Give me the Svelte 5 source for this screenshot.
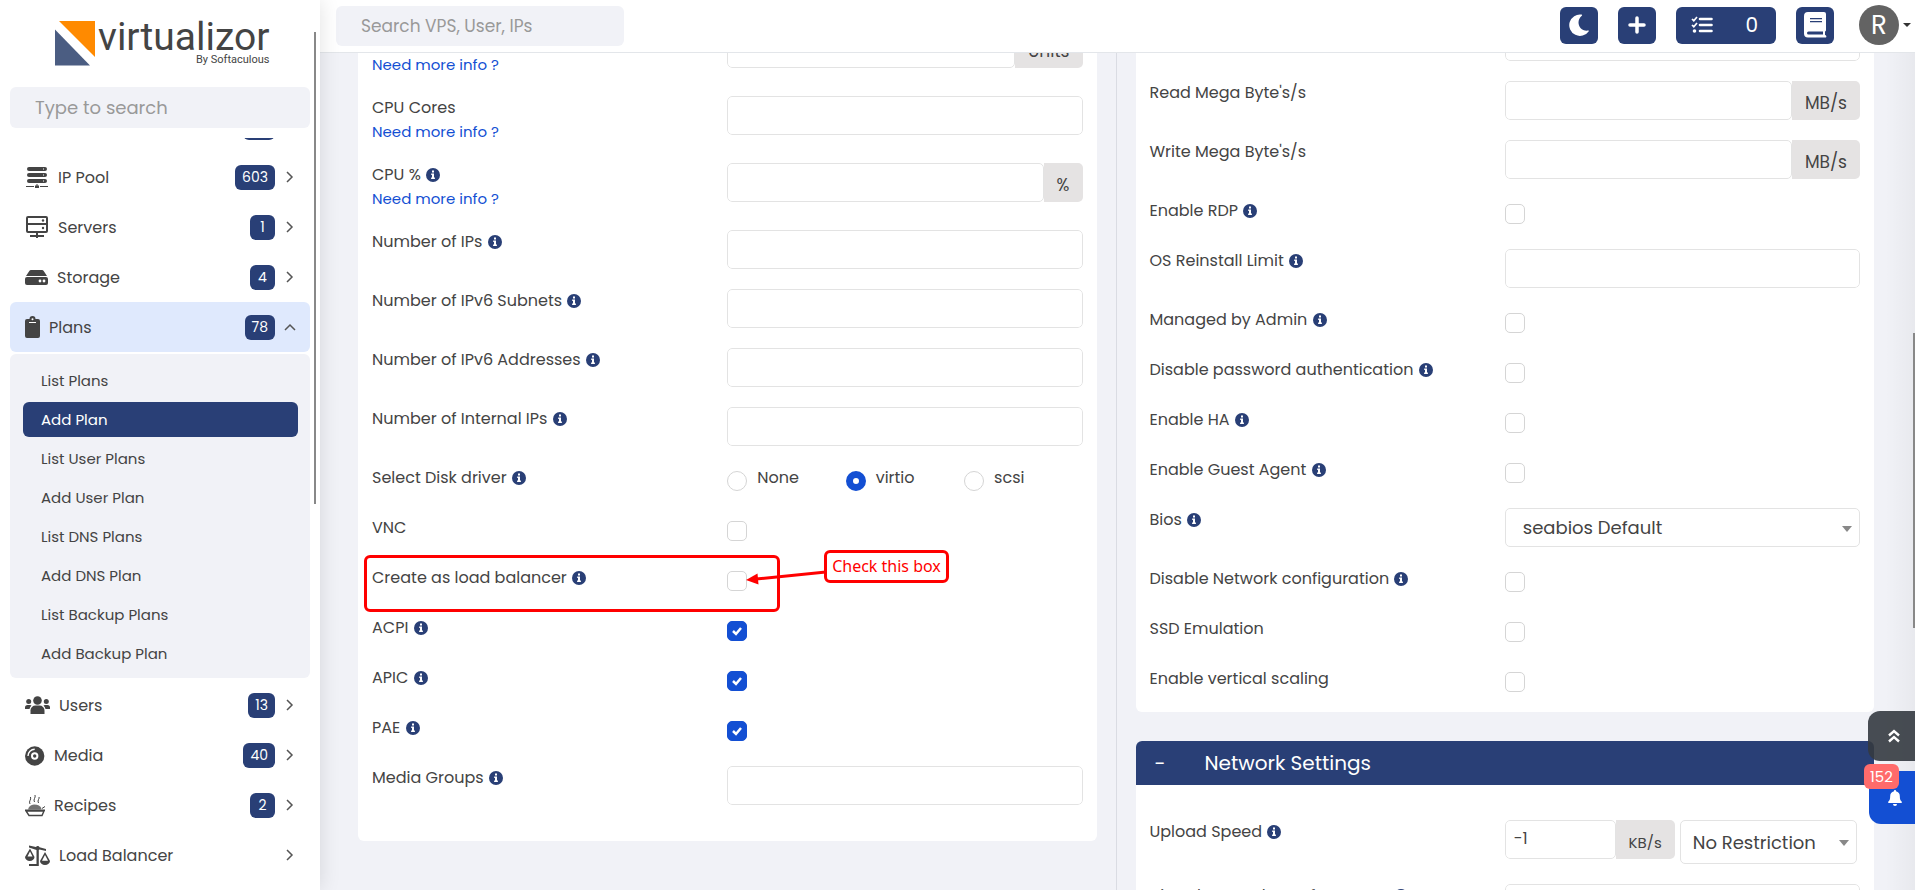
<script lang="ts">
  import { onMount } from 'svelte';

  interface Field {
    id: string;
    label: string;
    kind: 'text' | 'check' | 'radio' | 'select';
    info?: boolean;
    more?: boolean;
    unit?: string;
    value?: string;
    checked?: boolean;
    marked?: boolean;
    options?: string[];
  }

  // sidebar entries, w is the icon width
  const topMenu = [
    { name: 'Virtual Servers', icon: 'servers', w: 24, count: '45', open: false },
    { name: 'IP Pool', icon: 'ippool', w: 24, count: '603', open: false },
    { name: 'Servers', icon: 'servers', w: 24, count: '1', open: false },
    { name: 'Storage', icon: 'storage', w: 23, count: '4', open: false },
    { name: 'Plans', icon: 'plans', w: 15, count: '78', open: true }
  ];
  const bottomMenu = [
    { name: 'Users', icon: 'users', w: 25, count: '13', open: false },
    { name: 'Media', icon: 'media', w: 20, count: '40', open: false },
    { name: 'Recipes', icon: 'recipes', w: 20, count: '2', open: false },
    { name: 'Load Balancer', icon: 'balance', w: 25, count: '', open: false }
  ];
  const planLinks = [
    'List Plans',
    'Add Plan',
    'List User Plans',
    'Add User Plan',
    'List DNS Plans',
    'Add DNS Plan',
    'List Backup Plans',
    'Add Backup Plan'
  ];
  const activeLink = 'Add Plan';

  const leftFields: Field[] = [
    { id: 'cpu', label: 'CPU Units', kind: 'text', info: true, more: true, unit: 'Units' },
    { id: 'cores', label: 'CPU Cores', kind: 'text', more: true },
    { id: 'cpu_percent', label: 'CPU %', kind: 'text', info: true, more: true, unit: '%' },
    { id: 'ips', label: 'Number of IPs', kind: 'text', info: true },
    { id: 'ips6_subnet', label: 'Number of IPv6 Subnets', kind: 'text', info: true },
    { id: 'ips6', label: 'Number of IPv6 Addresses', kind: 'text', info: true },
    { id: 'ips_int', label: 'Number of Internal IPs', kind: 'text', info: true },
    { id: 'disk_driver', label: 'Select Disk driver', kind: 'radio', info: true, options: ['None', 'virtio', 'scsi'] },
    { id: 'vnc', label: 'VNC', kind: 'check' },
    { id: 'load_balancer', label: 'Create as load balancer', kind: 'check', info: true, marked: true },
    { id: 'acpi', label: 'ACPI', kind: 'check', info: true, checked: true },
    { id: 'apic', label: 'APIC', kind: 'check', info: true, checked: true },
    { id: 'pae', label: 'PAE', kind: 'check', info: true, checked: true },
    { id: 'mgs', label: 'Media Groups', kind: 'text', info: true }
  ];

  const rightFields: Field[] = [
    { id: 'total_iops', label: 'Total I/O per sec', kind: 'text' },
    { id: 'read_mb', label: "Read Mega Byte's/s", kind: 'text', unit: 'MB/s' },
    { id: 'write_mb', label: "Write Mega Byte's/s", kind: 'text', unit: 'MB/s' },
    { id: 'rdp', label: 'Enable RDP', kind: 'check', info: true },
    { id: 'os_limit', label: 'OS Reinstall Limit', kind: 'text', info: true },
    { id: 'admin_managed', label: 'Managed by Admin', kind: 'check', info: true },
    { id: 'disable_pw', label: 'Disable password authentication', kind: 'check', info: true },
    { id: 'ha', label: 'Enable HA', kind: 'check', info: true },
    { id: 'guest_agent', label: 'Enable Guest Agent', kind: 'check', info: true },
    { id: 'bios', label: 'Bios', kind: 'select', info: true, options: ['seabios Default', 'ovmf'] },
    { id: 'disable_nw', label: 'Disable Network configuration', kind: 'check', info: true },
    { id: 'ssd', label: 'SSD Emulation', kind: 'check' },
    { id: 'vertical', label: 'Enable vertical scaling', kind: 'check' }
  ];

  let driver = $state('virtio');
  let menuEl: HTMLElement;

  onMount(() => {
    menuEl.scrollTop = 36;
  });
</script>

{#snippet infoIcon()}
  <svg class="info" viewBox="0 0 14 14" aria-hidden="true">
    <circle cx="7" cy="7" r="7" fill="#293f76" />
    <path d="M6 2.6h2v1.9H6zM5.2 5.6H8v4h.9v1.3H5.1V9.6H6V6.9h-.8z" fill="#fff" />
  </svg>
{/snippet}

{#snippet menuIcon(name: string, w: number)}
  <svg width={w} height="24" viewBox="0 0 {w} 24" fill="#444" aria-hidden="true">
    {#if name === 'ippool'}
      <rect x="2" y="2" width="20" height="4" rx="2" />
      <rect x="2" y="8" width="20" height="4" rx="2" />
      <rect x="2" y="14" width="20" height="4" rx="2" />
      <path d="M18 3.5h1v1h-1zM18 9.5h1v1h-1zM18 15.5h1v1h-1z" fill="#fff" />
      <path d="M1 21h8v1H1zM15 21h8v1h-8zM11.5 19h1v1.5H14v2.500h-4v-2.500h1.500z" />
    {:else if name === 'servers'}
      <path d="M3 1h18a2 2 0 0 1 2 2v13a2 2 0 0 1-2 2h-8v2h6v2h-6v1h-2v-1H5v-2h6v-2H3a2 2 0 0 1-2-2V3a2 2 0 0 1 2-2zm0 2v5h18V3zm0 7v6h18v-6z" fill-rule="evenodd" />
      <circle cx="18" cy="5.5" r="1.2" />
      <circle cx="18" cy="13" r="1.2" />
    {:else if name === 'storage'}
      <path d="M6 5h11a2 2 0 0 1 1.700.9L22 11H1l3.300-5.100A2 2 0 0 1 6 5z" />
      <path d="M2 12h19a2 2 0 0 1 2 2v4a2 2 0 0 1-2 2H2a2 2 0 0 1-2-2v-4a2 2 0 0 1 2-2z" />
      <circle cx="15" cy="16" r="1.4" fill="#fff" />
      <circle cx="19" cy="16" r="1.4" fill="#fff" />
    {:else if name === 'plans'}
      <path d="M2 4h2.500a3 3 0 0 1 6 0H13a2 2 0 0 1 2 2v15a2 2 0 0 1-2 2H2a2 2 0 0 1-2-2V6a2 2 0 0 1 2-2z" />
      <circle cx="7.5" cy="4.3" r="1" fill="#fff" />
      <path d="M4 7h7v1H4z" fill="#fff" />
    {:else if name === 'users'}
      <circle cx="12.5" cy="7.5" r="4.3" />
      <path d="M5.500 21v-3.500a5 5 0 0 1 5-5h4a5 5 0 0 1 5 5V21z" />
      <circle cx="3.7" cy="8.5" r="2.5" />
      <circle cx="21.3" cy="8.5" r="2.5" />
      <path d="M0 16v-1.500A2.500 2.500 0 0 1 2.500 12H5q1 0 1.500.5Q4.800 14 4.500 16zM25 16v-1.500a2.500 2.500 0 0 0-2.500-2.500H20q-1 0-1.500.5 1.700 1.500 2 3.500z" />
    {:else if name === 'media'}
      <circle cx="9.7" cy="13" r="9.7" />
      <circle cx="9.7" cy="13" r="2.7" fill="none" stroke="#fff" stroke-width="2" />
      <path d="M3 13a6.700 6.700 0 0 1 6.700-6.700" fill="none" stroke="#fff" stroke-width="1.4" />
    {:else if name === 'recipes'}
      <g fill="none" stroke="#444" stroke-width="1">
        <path d="M1 18h18l-2 4.500H4z" stroke-width="1.4" />
        <path d="M17 15.500l3-2M5 11q-1-2 0-3.500T5.500 4M9.500 9q-1-2 0-3.500T10 2M13.500 10q-1-2 0-3.500T14 4" />
      </g>
      <path d="M3 16.500Q4 12 9 11.500q6 0 7.500 4l-1 1z" opacity=".75" />
      <path d="M0 16.500h20v1.500H0z" />
    {:else if name === 'balance'}
      <path d="M4 2.500l7 1.500a2 2 0 0 1 3.500.3L21 6v2l-6.500-1.500-.7.500v16H4V21h7.500V7L4 4.500z" />
      <path d="M5 5.500L9.500 14a4.700 4 0 0 1-9.500 0zM5 8.500L2.500 13.500h5zM20 9l5 9a5 4 0 0 1-10 0zM20 12l-3 5.700h6z" fill-rule="evenodd" />
    {/if}
  </svg>
{/snippet}

{#snippet menuRow(item: { name: string; icon: string; w: number; count: string; open: boolean })}
  <a class={`menu-row ${item.open ? 'open' : ''}`} href="#menu">
    {@render menuIcon(item.icon, item.w)}
    <span class="menu-name">{item.name}</span>
    {#if item.count}
      <span class="badge">{item.count}</span>
    {/if}
    <svg class="chevron" width="12" height="12" viewBox="0 0 12 12" fill="none" stroke="#555" stroke-width="1.5" aria-hidden="true">
      <path d={item.open ? 'M1 9l5-5 5 5' : 'M3 1l5 5-5 5'} />
    </svg>
  </a>
{/snippet}

{#snippet fieldRow(f: Field)}
  <div class="row">
    <div class="row-label">
      {#if f.kind === 'radio'}
        <span>{f.label}</span>
      {:else}
        <label for={f.id}>{f.label}</label>
      {/if}
      {#if f.info}{@render infoIcon()}{/if}
      {#if f.more}<a class="more" href="#more">Need more info ?</a>{/if}
    </div>

    {#if f.kind === 'text'}
      <div class="group">
        <input class="text" id={f.id} type="text" />
        {#if f.unit}<span class="unit">{f.unit}</span>{/if}
      </div>
    {:else if f.kind === 'check'}
      <div class="toggle"><input id={f.id} type="checkbox" checked={f.checked} /></div>
    {:else if f.kind === 'radio'}
      <div class="toggle radios">
        {#each f.options ?? [] as opt}
          <label class="radio"><input type="radio" name={f.id} value={opt} bind:group={driver} /><span>{opt}</span></label>
        {/each}
      </div>
    {:else}
      <div class="select">
        <select id={f.id}>
          {#each f.options ?? [] as opt}<option>{opt}</option>{/each}
        </select>
      </div>
    {/if}

    {#if f.marked}
      <!-- hint drawn over the row -->
      <div class="mark-box"></div>
      <svg class="mark-arrow" width="80" height="20" viewBox="0 0 80 20" aria-hidden="true">
        <path d="M80 6L10 13" stroke="#f00" stroke-width="3" />
        <path d="M0 14l11.500-6.500 1 11z" fill="#f00" />
      </svg>
      <div class="mark-text">Check this box</div>
    {/if}
  </div>
{/snippet}

<div class="layout">
  <aside>
    <a class="logo" href="#home">
      <svg width="40" height="46" viewBox="0 0 40 46" aria-hidden="true">
        <path d="M4 1h36v36z" fill="#ff8a00" />
        <path d="M0 9.500v36h35z" fill="#4b5d82" />
      </svg>
      <span class="brand">
        <span class="brand-name">virtualizor</span>
        <span class="brand-by">By Softaculous</span>
      </span>
    </a>

    <input class="side-search" type="text" placeholder="Type to search" aria-label="Type to search" />

    <nav bind:this={menuEl}>
      {#each topMenu as item}{@render menuRow(item)}{/each}
      <div class="submenu">
        {#each planLinks as link}
          <a class={link === activeLink ? 'active' : ''} href="#plans">{link}</a>
        {/each}
      </div>
      {#each bottomMenu as item}{@render menuRow(item)}{/each}
    </nav>
    <div class="side-thumb"></div>
  </aside>

  <div class="page">
    <header>
      <input class="top-search" type="text" placeholder="Search VPS, User, IPs" aria-label="Search VPS, User, IPs" />
      <div class="tools">
        <button class="tool" aria-label="Dark mode">
          <svg width="22" height="22" viewBox="0 0 22 22" fill="#fff"><path d="M13.500 .6A10.700 10.700 0 1 0 20.800 17.200 .5.500 0 0 0 20.300 16.500C11.500 18 7 7.500 13.800 1.700 14.400 1.200 14.200.7 13.500.6z" /></svg>
        </button>
        <button class="tool" aria-label="Add">
          <svg width="18" height="18" viewBox="0 0 18 18" stroke="#fff" stroke-width="3.5" stroke-linecap="round"><path d="M9 2v14M2 9h14" /></svg>
        </button>
        <button class="tool tasks" aria-label="Tasks">
          <svg width="22" height="18" viewBox="0 0 22 18" fill="none" stroke="#fff">
            <path d="M9 3h11.500M9 9h11.500M9 15h11.500" stroke-width="2.6" stroke-linecap="round" />
            <path d="M1 3l1.800 1.700L6 1M1 9l1.800 1.700L6 7" stroke-width="1.7" />
            <circle cx="3.5" cy="15" r="1.8" fill="#fff" stroke="none" />
          </svg>
          <span>0</span>
        </button>
        <button class="tool" aria-label="Documentation">
          <svg width="24" height="26" viewBox="0 0 24 26" fill="#fff">
            <path d="M5 0h16a2 2 0 0 1 2 2v16a1.500 1.500 0 0 1-1 1.500v3.500a1.500 1.500 0 0 1 1 2.500H5a4 4 0 0 1-4-4V4a4 4 0 0 1 4-4z" />
            <path d="M7 6h12v1.300H7zM7 9h12v1.300H7zM5.500 19.500H20v3H5.500a1.500 1.500 0 0 1 0-3z" fill="#293f76" />
          </svg>
        </button>
        <button class="account" aria-label="Account"><span class="avatar">R</span><span class="caret"></span></button>
      </div>
    </header>

    <main>
      <div class="columns">
        <section class="card tall">
          {#each leftFields as f}{@render fieldRow(f)}{/each}
        </section>

        <div class="divider"></div>

        <div class="stack">
          <section class="card">
            {#each rightFields as f}{@render fieldRow(f)}{/each}
          </section>

          <section class="panel">
            <h2><span class="minus">-</span>Network Settings</h2>
            <div class="panel-body">
              <div class="row">
                <div class="row-label">
                  <label for="upload">Upload Speed</label>
                  {@render infoIcon()}
                </div>
                <div class="speed">
                  <div class="group">
                    <input class="text" id="upload" type="text" value="-1" />
                    <span class="unit small">KB/s</span>
                  </div>
                  <div class="select high">
                    <select aria-label="Upload Speed preset"><option>No Restriction</option></select>
                  </div>
                </div>
              </div>
              {@render fieldRow({ id: 'nic', label: 'Virtual Network Interface Type', kind: 'text', info: true })}
            </div>
          </section>
        </div>
      </div>
    </main>
  </div>

  <button class="to-top" aria-label="Back to top">
    <svg width="12" height="14" viewBox="0 0 12 14" fill="none" stroke="#fff" stroke-width="2.4"><path d="M1 6.500l5-4.500 5 4.500M1 12.500L6 8l5 4.500" /></svg>
  </button>
  <button class="alerts" aria-label="Notifications">
    <svg width="14" height="16" viewBox="0 0 14 16" fill="#fff"><path d="M7 0a1 1 0 0 1 1 1.200A5 5 0 0 1 11.800 6c0 3.500.7 4.500 1.800 5.500.8.800.3 1.500-.6 1.500H1c-.9 0-1.400-.7-.6-1.500C1.500 10.500 2.200 9.500 2.200 6A5 5 0 0 1 6 1.200 1 1 0 0 1 7 0zM5 14h4a2 2 0 0 1-4 0z" /></svg>
    <span class="alert-count">152</span>
  </button>
  <div class="page-thumb"></div>
</div>

<style>
  :global(body) {
    overflow: hidden;
  }

  .layout {
    display: flex;
    height: 100vh;
    font-family: Poppins, Inter, sans-serif;
    font-size: 16px;
    color: #444;
    background: #f1f2f7;
  }
  .layout * {
    box-sizing: border-box;
  }
  a {
    color: inherit;
    text-decoration: none;
  }
  input,
  select,
  button {
    font: inherit;
    color: inherit;
  }
  button {
    border: 0;
    padding: 0;
    cursor: pointer;
  }

  /* sidebar */
  aside {
    position: relative;
    z-index: 3;
    display: flex;
    flex-direction: column;
    flex: none;
    width: 320px;
    padding: 20px 10px 0;
    background: #fff;
    box-shadow: 0 0 20px rgba(0, 0, 0, 0.12);
  }
  .logo {
    display: flex;
    gap: 3px;
    height: 46px;
    padding-left: 45px;
  }
  .brand {
    display: flex;
    flex-direction: column;
    align-items: flex-end;
    font-family: Roboto, sans-serif;
  }
  .brand-name {
    font-size: 39px;
    line-height: 34px;
  }
  .brand-by {
    font-size: 11px;
    line-height: 12px;
  }
  .side-search,
  .top-search {
    border: 0;
    border-radius: 6px;
    background: #f1f2f7;
    padding: 0 25px;
    outline: 0;
  }
  .side-search {
    flex: none;
    height: 41px;
    margin-top: 21px;
    font-size: 18px;
  }
  .side-search::placeholder,
  .top-search::placeholder {
    color: #999;
    opacity: 1;
  }
  nav {
    flex: 1;
    min-height: 0;
    margin-top: 10px;
    padding-bottom: 20px;
    overflow-y: auto;
    scrollbar-width: none;
  }
  .menu-row {
    display: flex;
    align-items: center;
    height: 50px;
    padding: 0 14px 0 15px;
    border-radius: 6px;
  }
  .menu-row.open {
    background: #dfe9fd;
  }
  .menu-name {
    flex: 1;
    padding-left: 9px;
  }
  .badge {
    height: 25px;
    min-width: 25px;
    padding: 0 7px;
    border-radius: 6px;
    background: #293f76;
    color: #fff;
    font-size: 14px;
    line-height: 25px;
    text-align: center;
  }
  .chevron {
    margin-left: 9px;
  }
  .submenu {
    display: flex;
    flex-direction: column;
    gap: 4px;
    margin: 2px 0;
    padding: 9px 12px 7px 13px;
    border-radius: 6px;
    background: #f1f2f7;
  }
  .submenu a {
    padding-left: 18px;
    border-radius: 6px;
    font-size: 15px;
    line-height: 35px;
  }
  .submenu .active {
    background: #293f76;
    color: #fff;
  }
  .side-thumb {
    position: absolute;
    top: 32px;
    right: 4px;
    width: 2px;
    height: 472px;
    background: #888;
  }

  /* top bar */
  .page {
    display: flex;
    flex-direction: column;
    flex: 1;
    min-width: 0;
  }
  header {
    position: relative;
    z-index: 2;
    display: flex;
    align-items: center;
    justify-content: space-between;
    flex: none;
    height: 53px;
    padding: 0 4px 0 16px;
    border-bottom: 1px solid #e3e6ea;
    background: #fff;
  }
  .top-search {
    width: 288px;
    height: 40px;
    font-size: 17px;
  }
  .tools {
    display: flex;
    align-items: center;
    gap: 20px;
    padding-bottom: 2px;
  }
  .tool {
    display: flex;
    align-items: center;
    justify-content: center;
    width: 38px;
    height: 37px;
    border-radius: 6px;
    background: #293f76;
    color: #fff;
  }
  .tasks {
    justify-content: space-between;
    width: 100px;
    padding: 0 18px 0 15px;
    font-size: 20px;
  }
  .account {
    display: flex;
    align-items: center;
    gap: 4px;
    margin-left: 5px;
    background: none;
  }
  .avatar {
    width: 40px;
    border-radius: 50%;
    background: #636363;
    color: #fff;
    font-size: 26px;
    line-height: 40px;
    text-align: center;
  }
  .caret {
    border: 4px solid transparent;
    border-top-color: #333;
    border-bottom: 0;
  }

  /* form */
  main {
    position: relative;
    flex: 1;
    min-height: 0;
    overflow: hidden;
  }
  main::after {
    content: '';
    position: absolute;
    inset: 0 0 0 auto;
    width: 30px;
    background: linear-gradient(to right, transparent, rgba(0, 0, 0, 0.04));
  }
  .columns {
    display: grid;
    grid-template-columns: 1fr 1px 1fr;
    column-gap: 19px;
    margin-top: -31px;
    padding: 0 41px 0 38px;
  }
  .divider {
    background: #dadce3;
  }
  .card {
    align-self: start;
    padding: 0 14px 15px;
    border-radius: 0 0 6px 6px;
    background: #fff;
  }
  .tall {
    padding-top: 7px;
    padding-bottom: 36px;
  }
  .row {
    position: relative;
    display: grid;
    grid-template-columns: 1fr 1fr;
    margin-bottom: 20px;
  }
  .row:last-child {
    margin-bottom: 0;
  }
  .row-label {
    line-height: 24px;
  }
  .info {
    width: 14px;
    height: 14px;
    margin-left: 1px;
    vertical-align: -2px;
  }
  .more {
    display: block;
    color: #134fd3;
    font-size: 15px;
    line-height: 23px;
  }
  .group {
    display: flex;
    height: 39px;
    border-radius: 5px;
    overflow: hidden;
  }
  .text {
    flex: 1;
    min-width: 0;
    padding: 0 8px 2px;
    border: 1px solid #e3e3e3;
    border-radius: 5px;
    background: #fff;
  }
  .unit {
    padding: 5px 13px 0;
    background: #e5e3e3;
    font-size: 17px;
    line-height: 35px;
  }
  .unit.small {
    font-size: 15px;
  }
  .toggle {
    height: 30px;
    padding-top: 5px;
  }
  input[type='checkbox'],
  input[type='radio'] {
    appearance: none;
    display: block;
    width: 20px;
    height: 20px;
    margin: 0;
    border: 1px solid #d5d5d5;
    border-radius: 5px;
    background: #fff;
  }
  input[type='radio'] {
    border-radius: 50%;
  }
  input[type='checkbox']:checked {
    border-color: #134fd3;
    background: #134fd3 url("data:image/svg+xml,%3Csvg xmlns='http://www.w3.org/2000/svg' viewBox='0 0 20 20'%3E%3Cpath d='M6 10l3 3 5-6' fill='none' stroke='%23fff' stroke-width='2.5'/%3E%3C/svg%3E") center / 20px;
  }
  input[type='radio']:checked {
    border: 7px solid #134fd3;
  }
  .radios {
    display: grid;
    grid-template-columns: 1fr 1fr 1fr;
  }
  .radio {
    display: flex;
    gap: 10px;
    line-height: 14px;
  }
  .select {
    position: relative;
    height: 39px;
  }
  .select.high {
    flex: 1;
    height: 44px;
  }
  .select::after {
    content: '';
    position: absolute;
    top: 50%;
    right: 8px;
    border: 5px solid transparent;
    border-top: 6px solid #888;
    border-bottom: 0;
    margin-top: -2px;
  }
  .select.high select {
    padding: 0 12px;
  }
  select {
    appearance: none;
    width: 100%;
    height: 100%;
    padding: 0 17px;
    border: 1px solid #e3e3e3;
    border-radius: 5px;
    background: #fff;
    font-size: 18px;
  }

  .mark-box {
    position: absolute;
    top: -11px;
    left: -8px;
    width: 416px;
    height: 57px;
    border: 3px solid #f00;
    border-radius: 6px;
  }
  .mark-arrow {
    position: absolute;
    top: 0;
    left: 374px;
  }
  .mark-text {
    position: absolute;
    top: -16px;
    left: 452px;
    width: 125px;
    height: 33px;
    border: 3px solid #f00;
    border-radius: 6px;
    color: #f00;
    font-family: 'Noto Sans', sans-serif;
    font-size: 16px;
    line-height: 27px;
    text-align: center;
  }

  .panel {
    margin-top: 29px;
    background: #fff;
    border-radius: 6px;
  }
  h2 {
    display: flex;
    margin: 0;
    padding: 0 19px;
    border-radius: 6px 6px 0 0;
    background: #293f76;
    color: #fff;
    font-size: 20px;
    font-weight: 400;
    line-height: 44px;
  }
  .minus {
    width: 50px;
  }
  .panel-body {
    padding: 35px 14px 15px;
  }
  .speed {
    display: flex;
    gap: 5px;
    padding-right: 3px;
  }
  .speed .group {
    width: 170px;
  }

  /* floating buttons */
  .to-top,
  .alerts {
    position: fixed;
    right: 0;
    z-index: 4;
    display: flex;
    align-items: center;
    justify-content: center;
    border-radius: 12px 0 0 12px;
  }
  .to-top {
    bottom: 129px;
    width: 47px;
    height: 50px;
    padding-left: 5px;
    background: rgba(52, 58, 64, 0.9);
  }
  .alerts {
    bottom: 66px;
    width: 46px;
    height: 53px;
    padding-left: 6px;
    background: #134fd3;
  }
  .alert-count {
    position: absolute;
    top: -7px;
    left: -5px;
    padding: 0 6px;
    border-radius: 6px;
    background: #ff6b6b;
    color: #fff;
    font-size: 15px;
    line-height: 25px;
  }
  .page-thumb {
    position: fixed;
    top: 333px;
    right: 0;
    z-index: 4;
    width: 2px;
    height: 295px;
    background: #888;
  }
</style>
